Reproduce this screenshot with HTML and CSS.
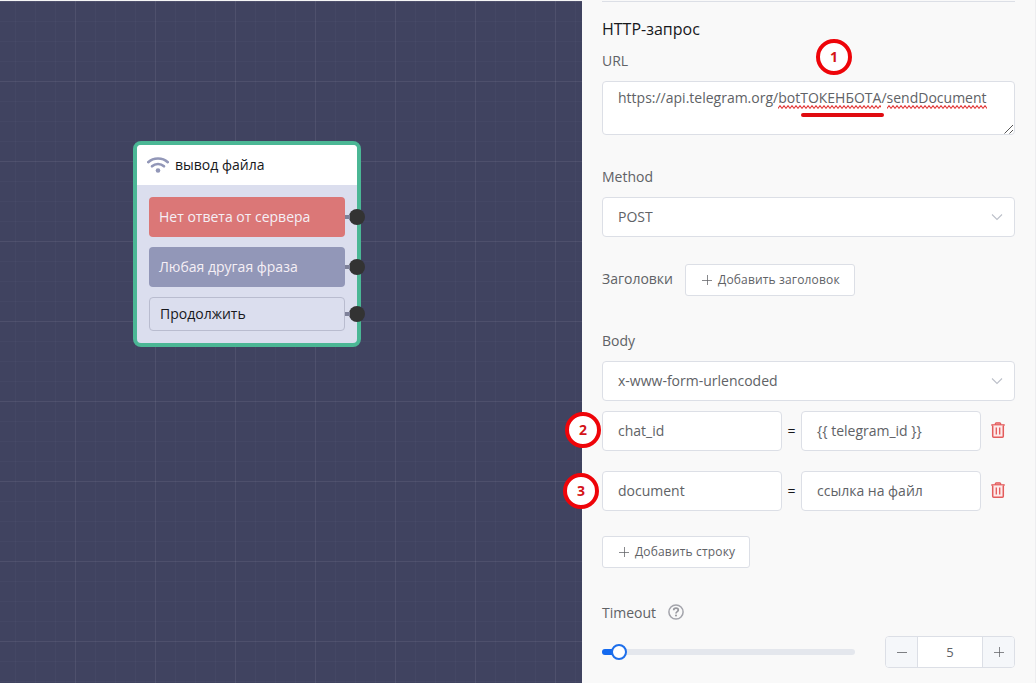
FILE: index.html
```html
<!DOCTYPE html>
<html lang="ru">
<head>
<meta charset="utf-8">
<title>HTTP-запрос</title>
<link rel="stylesheet" href="styles.css">
</head>
<body>
<svg class="defs" width="0" height="0" aria-hidden="true">
  <defs>
    <pattern id="wave" width="4" height="4" patternUnits="userSpaceOnUse">
      <path d="M-2 .7 L0 3.300 L2 .7 L4 3.300 L6 .7" fill="none" stroke="#e23636" stroke-width="1.100"/>
    </pattern>
    <symbol id="plus" viewBox="0 0 12 12"><path d="M6.500 1v10M1 6.500h10" fill="none" stroke="currentColor" stroke-width="1" opacity=".75"/></symbol>
    <symbol id="chevron" viewBox="0 0 12 8"><path d="M1 1.500 6 6.500 11 1.500" fill="none" stroke="currentColor" stroke-width="1.100"/></symbol>
    <symbol id="trash" viewBox="0 0 14 16">
      <path d="M4.300 2.800V1.700Q4.300.8 5.200.8H8.800Q9.700.8 9.700 1.700V2.800" fill="#f3a3a3" stroke="currentColor" stroke-width="1.200"/>
      <path d="M.3 3H13.700" stroke="currentColor" stroke-width="1.600"/>
      <path d="M1.700 3.500V14.200Q1.700 15.200 2.700 15.200H11.300Q12.300 15.200 12.300 14.200V3.500" fill="#fdeaea" stroke="currentColor" stroke-width="1.500"/>
      <path d="M5.300 5.500V12.500M8.700 5.500V12.500" stroke="currentColor" stroke-width="1.300"/>
    </symbol>
  </defs>
</svg>
<div class="app">
  <main class="canvas">
    <section class="node">
      <header class="node-head">
        <svg class="wifi" viewBox="0 0 22 16" width="22" height="16">
          <path d="M1.200 5.200C6.500.2 15.500.2 20.800 5.200" fill="none" stroke="#9297b8" stroke-width="2.600" stroke-linecap="round"/>
          <path d="M5 9.300C8.300 6.200 13.700 6.200 17 9.300" fill="none" stroke="#9297b8" stroke-width="2.600" stroke-linecap="round"/>
          <circle cx="11" cy="13.500" r="2.300" fill="#9297b8"/>
        </svg>
        <span>вывод файла</span>
      </header>
      <div class="node-body">
        <div class="option option-error">Нет ответа от сервера<i class="port"></i></div>
        <div class="option option-any">Любая другая фраза<i class="port"></i></div>
        <div class="option option-next">Продолжить<i class="port"></i></div>
      </div>
    </section>
  </main>
  <aside class="panel">
    <h1 class="title">HTTP-запрос</h1>
    <div class="label url-label">URL</div>
    <div class="box url-box">https://api.telegram.org/<span class="misspelt">botТОКЕНБОТА<svg class="wave"><rect width="100%" height="4" fill="url(#wave)"/></svg></span>/<span class="misspelt">sendDocument<svg class="wave"><rect width="100%" height="4" fill="url(#wave)"/></svg></span>
      <span class="underline"></span>
      <svg class="resize" viewBox="0 0 10 10" width="10" height="10"><path d="M.5 9.500 9 1M5.500 9.500 9 6" stroke="#555" stroke-width="1"/></svg>
    </div>
    <div class="label method-label">Method</div>
    <div class="box select"><span>POST</span><svg class="chevron" width="12" height="8"><use href="#chevron"/></svg></div>
    <div class="headers-row">
      <span class="label">Заголовки</span>
      <button class="button"><svg width="12" height="12"><use href="#plus"/></svg>Добавить заголовок</button>
    </div>
    <div class="label body-label">Body</div>
    <div class="box select"><span>x-www-form-urlencoded</span><svg class="chevron" width="12" height="8"><use href="#chevron"/></svg></div>
    <div class="pair">
      <div class="box field">chat_id</div><span class="equals">=</span><div class="box field">{{ telegram_id }}</div>
      <svg class="trash" width="14" height="16"><use href="#trash"/></svg>
    </div>
    <div class="pair">
      <div class="box field">document</div><span class="equals">=</span><div class="box field">ссылка на файл</div>
      <svg class="trash" width="14" height="16"><use href="#trash"/></svg>
    </div>
    <button class="button add-line"><svg width="12" height="12"><use href="#plus"/></svg>Добавить строку</button>
    <div class="timeout-label"><span class="label">Timeout</span>
      <svg viewBox="0 0 16 16" width="16" height="16"><circle cx="8" cy="8" r="7.100" fill="none" stroke="#a3a4ab" stroke-width="1.500"/><path d="M5.700 6.200Q5.700 4.200 8 4.200T10.300 6.100C10.300 7.700 8 7.500 8 9.500" fill="none" stroke="#98999f" stroke-width="1.700"/><circle cx="8" cy="11.500" r="1.050" fill="#98999f"/></svg>
    </div>
    <div class="timeout">
      <div class="slider"><div class="slider-fill"></div><div class="thumb"></div></div>
      <div class="number"><span class="step"><svg width="12" height="12" viewBox="0 0 12 12"><path d="M1 6.500h10" stroke="currentColor" opacity=".8"/></svg></span><span class="value">5</span><span class="step"><svg width="12" height="12"><use href="#plus"/></svg></span></div>
    </div>
  </aside>
  <div class="marker marker-one">1</div>
  <div class="marker marker-two">2</div>
  <div class="marker marker-three">3</div>
</div>
</body>
</html>
```
FILE: styles.css
```css
* { box-sizing: border-box; }
body { margin: 0; font-family: "Open Sans", sans-serif; font-size: 14px; color: #606266; }
.defs { position: absolute; }
.app { position: relative; display: flex; width: 1036px; height: 683px; overflow: hidden; }
.canvas {
  position: relative;
  width: 582px;
  border-top: 1px solid #f5f6f6;
  background-color: #404360;
  background-image:
    linear-gradient(90deg, rgba(255,255,255,.05) 1px, transparent 1px),
    linear-gradient(rgba(255,255,255,.05) 1px, transparent 1px),
    linear-gradient(90deg, rgba(255,255,255,.025) 1px, transparent 1px),
    linear-gradient(rgba(255,255,255,.025) 1px, transparent 1px);
  background-size: 80px 80px, 80px 80px, 20px 20px, 20px 20px;
  background-position: 75px 0, 0 80px, 15px 0, 0 0;
}
.node { position: absolute; left: 133px; top: 140px; width: 228px; height: 206px; border: 4px solid #4bb795; border-radius: 8px; background: #dbdeee; }
.node-head { display: flex; align-items: center; gap: 6px; height: 40px; padding: 0 0 2px 10px; background: #fff; border-radius: 4px 4px 0 0; color: #17181c; }
.wifi { margin-top: 1px; }
.node-body { display: flex; flex-direction: column; gap: 10px; padding: 12px; }
.option { position: relative; display: flex; align-items: center; width: 196px; height: 40px; padding: 0 0 2px 10px; border-radius: 4px; color: #f5eff5; }
.option-error { background: #db7777; }
.option-any { background: #9297b8; }
.option-next { height: 34px; border: 1px solid #b9bccf; color: #17181c; }
.port { position: absolute; right: -20px; top: 50%; width: 16px; height: 16px; margin-top: -8px; border-radius: 50%; background: #333; }
.port::before { content: ""; position: absolute; left: -4px; top: 6px; width: 5px; height: 4px; background: #7e8199; }
.option-next .port { right: -21px; }
.panel { width: 454px; padding: 1px 20px 0; background: #f9f9f9; border-right: 1px solid #eeeef0; }
.title { width: 413px; margin: 0; padding-top: 16px; border-top: 1px solid #dcdfe6; font-size: 16px; line-height: 22px; font-weight: 400; color: #17181c; }
.label { line-height: 20px; }
.url-label { margin-top: 11px; }
.box { width: 413px; border: 1px solid #dcdfe6; border-radius: 4px; background: #fff; }
.url-box { position: relative; height: 54px; margin-top: 10px; padding: 5px 15px; line-height: 21px; white-space: nowrap; }
.misspelt { position: relative; }
.wave { position: absolute; left: 0; bottom: -2px; width: 100%; height: 4px; }
.underline { position: absolute; left: 198px; top: 31px; width: 83px; height: 4px; border-radius: 2px; background: #e00b10; }
.resize { position: absolute; right: 0; bottom: 0; }
.method-label { margin-top: 32px; }
.select { display: flex; align-items: center; justify-content: space-between; height: 40px; margin-top: 10px; padding: 0 11px 2px 15px; }
.chevron { margin-top: 2px; color: #bcc0c9; }
.headers-row { display: flex; align-items: center; gap: 12px; height: 32px; margin-top: 27px; }
.headers-row .label { margin-top: -2px; }
.button { display: flex; align-items: center; gap: 5px; height: 32px; padding: 0 14px 1px 15px; border: 1px solid #dcdfe6; border-radius: 3px; background: #fff; color: #606266; font: 500 12px "Open Sans", sans-serif; letter-spacing: .16px; white-space: nowrap; }
.body-label { margin-top: 35px; }
.pair { display: flex; align-items: center; height: 40px; margin-top: 10px; }
.pair + .pair { margin-top: 20px; }
.field { display: flex; align-items: center; width: 180px; height: 40px; padding: 0 0 2px 15px; }
.equals { width: 19px; padding-bottom: 2px; text-align: center; color: #17181c; }
.trash { margin-left: 10px; margin-top: -2px; color: #e35b5b; }
.add-line { margin-top: 25px; }
.timeout-label { display: flex; align-items: center; gap: 12px; height: 20px; margin-top: 34px; }
.timeout-label .label { padding-top: 2px; }
.timeout { display: flex; align-items: center; gap: 30px; height: 32px; margin-top: 14px; }
.slider { position: relative; width: 253px; height: 6px; border-radius: 3px; background: #e4e7ed; }
.slider-fill { width: 17px; height: 6px; border-radius: 3px; background: #146af0; }
.thumb { position: absolute; left: 9px; top: -5px; width: 16px; height: 16px; border: 2px solid #1e6feb; border-radius: 50%; background: #fff; }
.number { display: flex; width: 130px; height: 32px; border: 1px solid #dcdfe6; border-radius: 4px; background: #fff; overflow: hidden; }
.step { display: grid; place-items: center; width: 31px; background: #f5f7fa; }
.value { display: grid; place-items: center; flex: 1; border: solid #dcdfe6; border-width: 0 1px; font-size: 13px; }
.marker { position: absolute; display: grid; place-items: center; width: 36px; height: 36px; padding-bottom: 1px; border: 4px solid #ee0409; border-radius: 50%; background: #fff; color: #d41318; font: 700 14px "Open Sans", sans-serif; }
.marker-one { left: 816px; top: 39px; }
.marker-two { left: 565px; top: 412px; }
.marker-three { left: 563px; top: 473px; }
```
